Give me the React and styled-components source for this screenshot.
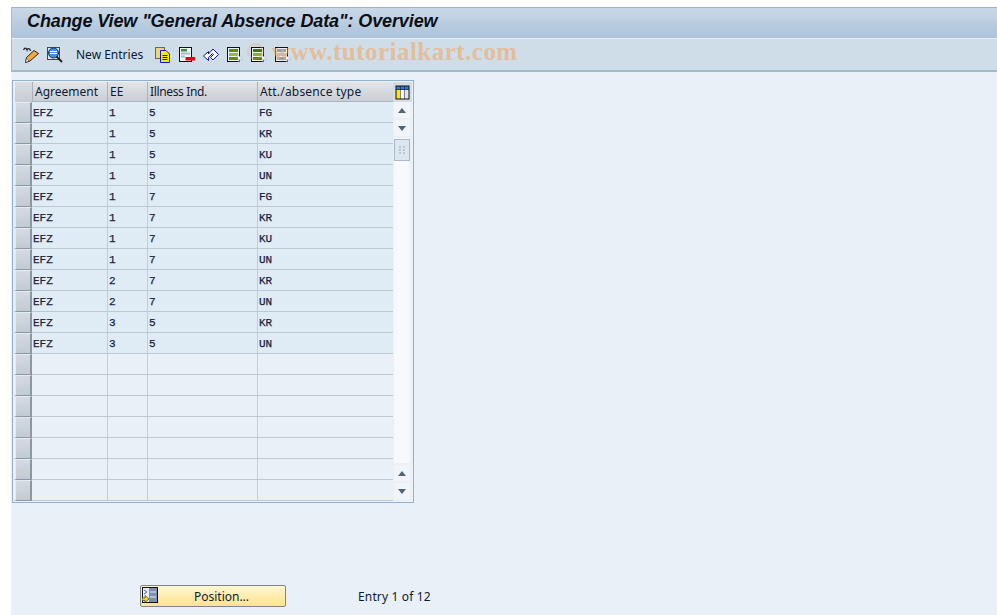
import React from 'react'
import styled, { createGlobalStyle } from 'styled-components'

const Global = createGlobalStyle`
	html, body { margin: 0; padding: 0; background: #fff; }
	body { font-family: "Noto Sans", "Liberation Sans", sans-serif; color: #0c1a33; }
`

const rows = [
	['EFZ', '1', '5', 'FG'],
	['EFZ', '1', '5', 'KR'],
	['EFZ', '1', '5', 'KU'],
	['EFZ', '1', '5', 'UN'],
	['EFZ', '1', '7', 'FG'],
	['EFZ', '1', '7', 'KR'],
	['EFZ', '1', '7', 'KU'],
	['EFZ', '1', '7', 'UN'],
	['EFZ', '2', '7', 'KR'],
	['EFZ', '2', '7', 'UN'],
	['EFZ', '3', '5', 'KR'],
	['EFZ', '3', '5', 'UN'],
	['', '', '', ''],
	['', '', '', ''],
	['', '', '', ''],
	['', '', '', ''],
	['', '', '', ''],
	['', '', '', ''],
	['', '', '', ''],
]

// sheet with a white pointer at the lower right, used three times in the toolbar
const SheetGlyph = ({ top, bottom }) => (
	<svg width="16" height="16" viewBox="0 0 16 16">
		<rect x=".5" y=".5" width="12" height="14" fill="#eef2f6" stroke="#111" />
		<rect x="2" y="2" width="9" height="3" fill={top} />
		<rect x="2" y="6" width="9" height="3" fill={bottom} />
		<rect x="2" y="10" width="9" height="3" fill={top} />
		<path d="M10 7.5 L15.5 12 L12.5 12.5 L12 15.5 Z" fill="#fff" stroke="#9aa7b5" strokeWidth=".5" />
	</svg>
)

const App = () => {
	return (
		<Page>
			<Global />
			<Main>
				<TitleBar>Change View "General Absence Data": Overview</TitleBar>
				<Toolbar>
					<ToolIcon>
						<svg width="16" height="16" viewBox="0 0 16 16">
							<path d="M.5 3 C1.5 .5 3 .5 4 3 C4.5 1 7 1 7.5 4" stroke="#222" strokeWidth="1.2" fill="none" />
							<path d="M2.5 15.5 L3.5 10.5 L11 3.5 L15.5 6.5 L7 14 Z" fill="#f5a93a" stroke="#222" />
							<path d="M2.5 15.5 L3.5 11.5 L6 14 Z" fill="#fff" stroke="#222" strokeWidth=".5" />
						</svg>
					</ToolIcon>
					<ToolIcon>
						<svg width="16" height="16" viewBox="0 0 16 16">
							<rect x=".5" y=".5" width="12" height="12" fill="#dfe8f2" stroke="#445" />
							<circle cx="6.5" cy="6" r="5" fill="#3f8fe0" stroke="#16305c" />
							<path d="M3 4.5 H10 M3 6.5 H10" stroke="#fff" />
							<path d="M9.5 9.5 L15 15" stroke="#222" strokeWidth="2" />
						</svg>
					</ToolIcon>
					<NewEntries>New Entries</NewEntries>
					<ToolIcon>
						<svg width="16" height="16" viewBox="0 0 16 16">
							<rect x=".5" y=".5" width="9" height="11" fill="#e8d77a" stroke="#667" />
							<path d="M5.5 3.5 H11 L14.5 7 V15.5 H5.5 Z" fill="#ffe900" stroke="#1414c8" />
							<path d="M7.5 8.5 H12.5 M7.5 10.5 H12.5 M7.5 12.5 H12.5" stroke="#1414c8" />
						</svg>
					</ToolIcon>
					<ToolIcon>
						<svg width="16" height="16" viewBox="0 0 16 16">
							<rect x=".5" y=".5" width="12" height="14" fill="#f2f4f6" stroke="#111" />
							<rect x="2" y="2" width="6" height="2.5" fill="#3f8f3f" />
							<path d="M2 5.5 H11 V7.5 H2 Z M2 8.5 H6 V10.5 H2 Z" fill="#a9bcd0" />
							<rect x="6.5" y="10" width="9.5" height="3.5" fill="#e4001b" />
						</svg>
					</ToolIcon>
					<ToolIcon>
						<svg width="16" height="16" viewBox="0 0 16 16">
							<path d="M.5 9 L5.5 4.5 V7 L10 2 L15.5 7.5 L10 13 L7.5 10.5 L10.5 7.5 L9.5 6.5 L5.5 10.5 V13.5 Z" fill="#fff" stroke="#14148c" />
						</svg>
					</ToolIcon>
					<ToolIcon><SheetGlyph top="#5f8a0a" bottom="#9ab83e" /></ToolIcon>
					<ToolIcon><SheetGlyph top="#3f7a0a" bottom="#8fae2e" /></ToolIcon>
					<ToolIcon><SheetGlyph top="#8aa2bb" bottom="#b6c6d6" /></ToolIcon>
				</Toolbar>
				<Content>
					<TableControl>
						<HeaderRow>
							<CornerCell />
							<HeaderCell $width={75}>Agreement</HeaderCell>
							<HeaderCell $width={40}>EE</HeaderCell>
							<HeaderCell $width={110} $spacing={-0.35}>Illness Ind.</HeaderCell>
							<HeaderCell $width={135} $spacing={0.18} $last>Att./absence type</HeaderCell>
							<LayoutCell>
								<svg width="15" height="15" viewBox="0 0 15 15">
									<rect x=".5" y=".5" width="14" height="14" fill="#111" />
									<rect x="1.5" y="1.5" width="3.5" height="3" fill="#2e7bd0" />
									<rect x="5.5" y="1.5" width="3.5" height="3" fill="#2e7bd0" />
									<rect x="9.5" y="1.5" width="4" height="3" fill="#2e7bd0" />
									<rect x="1.5" y="5" width="3.5" height="8.5" fill="#ffe600" />
									<rect x="5.5" y="5" width="3.5" height="8.5" fill="#f4f7fa" />
									<rect x="9.5" y="5" width="4" height="8.5" fill="#dde6ef" />
								</svg>
							</LayoutCell>
						</HeaderRow>
						<TableBody>
							<Rows>
								{rows.map((r, i) => (
									<Row key={i} $filled={r[0] !== ''}>
										<Selector />
										<KeyCell $width={75}>{r[0]}</KeyCell>
										<Cell $width={40}>{r[1]}</Cell>
										<Cell $width={110}>{r[2]}</Cell>
										<Cell $width={135} $last>{r[3]}</Cell>
									</Row>
								))}
							</Rows>
							<ScrollBar>
								<ScrollButton><ArrowUp /></ScrollButton>
								<ScrollButton><ArrowDown /></ScrollButton>
								<Track>
									<Thumb>
										<svg width="6" height="9" viewBox="0 0 6 9">
											<path d="M0 1 H2 M4 1 H6 M0 4 H2 M4 4 H6 M0 7 H2 M4 7 H6" stroke="#9aa7b5" />
										</svg>
									</Thumb>
								</Track>
								<ScrollButton><ArrowUp /></ScrollButton>
								<ScrollButton><ArrowDown /></ScrollButton>
							</ScrollBar>
						</TableBody>
					</TableControl>
					<Footer>
						<PositionButton>
							<ButtonIcon>
								<svg width="16" height="16" viewBox="0 0 16 16">
									<rect x=".5" y=".5" width="15" height="15" fill="#e6ecf3" stroke="#111" />
									<rect x="7" y="1" width="8" height="14" fill="#7d8fb0" />
									<path d="M8 5 H14 M8 10 H14" stroke="#e6ecf3" />
									<path d="M2 3 L5 5 L2 7" fill="none" stroke="#5a6a80" />
									<path d="M0 11 H3 V8.5 L7 12 L3 15.5 V13.5 H0 Z" fill="#ffd800" stroke="#222" strokeWidth=".6" />
								</svg>
							</ButtonIcon>
							Position...
						</PositionButton>
						<EntryText>Entry 1 of 12</EntryText>
					</Footer>
				</Content>
			</Main>
			<WatermarkRing />
			<Watermark>www.tutorialkart.com</Watermark>
		</Page>
	)
}

const Page = styled.div`
	position: relative;
	width: 997px;
	height: 615px;
	overflow: hidden;
	background: #fff;
	padding-left: 11px;
	box-sizing: border-box;
`

const Main = styled.div`
	height: 100%;
	padding-top: 7px;
	box-sizing: border-box;
	display: flex;
	flex-direction: column;
`

const TitleBar = styled.div`
	height: 31px;
	box-sizing: border-box;
	padding: 3px 0 0 15px;
	background: linear-gradient(#c9d8e7, #acc3da);
	border-top: 1px solid #9fb3c7;
	border-left: 1px solid #a9bccf;
	font-family: "Liberation Sans", sans-serif;
	font-weight: bold;
	font-style: italic;
	font-size: 18px;
	line-height: 20px;
	letter-spacing: -.1px;
	color: #0b0f14;
	white-space: nowrap;
`

const Toolbar = styled.div`
	height: 34px;
	box-sizing: border-box;
	display: flex;
	align-items: center;
	gap: 8px;
	padding: 0 0 0 11px;
	background: #cfdde9;
	border-top: 1px solid #e6eef5;
	border-bottom: 2px solid #a4b8cc;
	border-left: 1px solid #a9bccf;
`

const ToolIcon = styled.span`
	display: flex;
	width: 16px;
	height: 16px;
`

const NewEntries = styled.span`
	font-size: 12px;
	width: 71px;
	margin-left: 5px;
	white-space: nowrap;
`

const Content = styled.div`
	flex: 1;
	background: #e9f0f8;
	padding: 8px 0 0 1px;
`

const TableControl = styled.div`
	width: 402px;
	height: 423px;
	box-sizing: border-box;
	border: 1px solid #8fb0d0;
	padding: 1px;
	box-shadow: inset 0 0 0 1px #eef3f9;
`

const HeaderRow = styled.div`
	display: flex;
	height: 20px;
`

const CornerCell = styled.div`
	width: 19px;
	box-sizing: border-box;
	background: linear-gradient(#d9dde2, #c6ccd3);
	border-right: 2px solid #a8b2bd;
	margin-left: 1px;
	margin-right: -1px;
`

const HeaderCell = styled.div`
	box-sizing: border-box;
	width: ${p => p.$width}px;
	background: linear-gradient(#e2e5e8, #c9ced4);
	border-right: ${p => (p.$last ? '0' : '1px solid #aab4bf')};
	border-bottom: 1px solid #aab4bf;
	font-size: 12px;
	line-height: 19px;
	letter-spacing: ${p => p.$spacing || 0}px;
	padding-left: 2px;
	white-space: nowrap;
`

const LayoutCell = styled.div`
	width: 19px;
	display: flex;
	align-items: center;
	justify-content: center;
	background: #d7dce2;
`

const TableBody = styled.div`
	display: flex;
`

const Rows = styled.div`
	width: 379px;
`

const Row = styled.div`
	display: flex;
	height: 21px;
	box-sizing: border-box;
	background: ${p => (p.$filled ? '#dfebf5' : '#e9f0f8')};
	border-bottom: 1px solid #bcc8d4;
`

const Selector = styled.div`
	width: 17px;
	margin: 0 1px -1px 1px;
	box-sizing: border-box;
	background: linear-gradient(#d6dae0, #c4cad1);
	border: 1px solid #e7ebef;
	border-right: 2px solid #8b97a3;
	border-bottom: 1px solid #8b97a3;
`

const Cell = styled.div`
	box-sizing: border-box;
	width: ${p => p.$width}px;
	font-family: "Liberation Mono", monospace;
	font-size: 11px;
	line-height: 22px;
	padding-left: 1px;
	color: #14233c;
	-webkit-text-stroke: .25px #14233c;
	border-right: ${p => (p.$last ? '0' : '1px solid #c3cdd8')};
`

const KeyCell = styled(Cell)`
	padding-left: 0;
	color: #2a2030;
`

const ScrollBar = styled.div`
	width: 19px;
	height: 399px;
	display: flex;
	flex-direction: column;
	padding: 0 2px 2px 1px;
	box-sizing: border-box;
	gap: 2px;
`

const ScrollButton = styled.div`
	height: 16px;
	flex: none;
	display: flex;
	align-items: center;
	justify-content: center;
	background: #f1f5fa;
`

const ArrowUp = styled.span`
	border-left: 4px solid transparent;
	border-right: 4px solid transparent;
	border-bottom: 5px solid #4f6478;
`

const ArrowDown = styled.span`
	border-left: 4px solid transparent;
	border-right: 4px solid transparent;
	border-top: 5px solid #4f6478;
`

const Track = styled.div`
	flex: 1;
	padding-top: 1px;
	background: #f7f9fc;
`

const Thumb = styled.div`
	height: 22px;
	box-sizing: border-box;
	border: 1px solid #a9b9c9;
	background: #dde6ef;
	display: flex;
	align-items: center;
	justify-content: center;
`

const Footer = styled.div`
	display: flex;
	align-items: center;
	margin: 82px 0 0 128px;
`

const PositionButton = styled.div`
	position: relative;
	width: 146px;
	height: 22px;
	box-sizing: border-box;
	border: 1px solid #7f8488;
	border-radius: 2px;
	background: linear-gradient(#fff6d2, #ffe48e);
	font-size: 12px;
	line-height: 22px;
	text-align: center;
	padding-left: 17px;
`

const ButtonIcon = styled.span`
	position: absolute;
	left: 1px;
	top: 1px;
	display: flex;
`

const EntryText = styled.span`
	font-size: 12px;
	letter-spacing: .15px;
	margin-left: 72px;
`

const Watermark = styled.div`
	position: absolute;
	left: 272px;
	top: 38px;
	font-family: "Liberation Serif", serif;
	font-weight: bold;
	font-size: 25px;
	line-height: 28px;
	letter-spacing: .48px;
	color: rgba(240, 170, 100, 0.62);
	white-space: nowrap;
	pointer-events: none;
`

const WatermarkRing = styled.div`
	position: absolute;
	left: 247px;
	top: 43px;
	width: 17px;
	height: 17px;
	box-sizing: border-box;
	border: 2px solid rgba(240, 170, 100, 0.3);
	border-radius: 50%;
	pointer-events: none;
`

export default App
